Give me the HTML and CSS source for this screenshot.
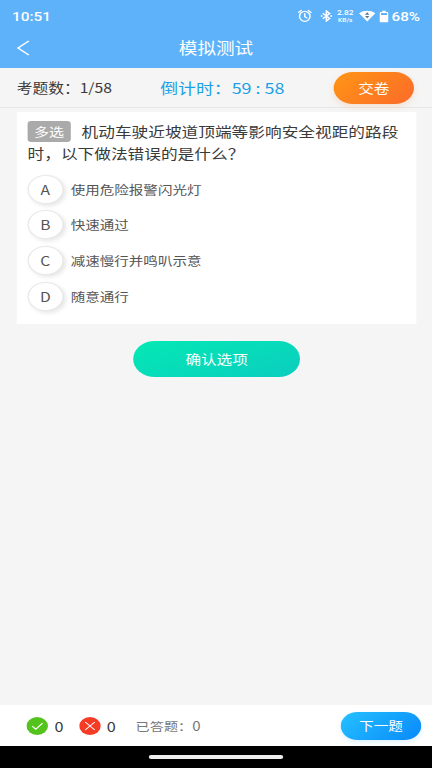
FILE: index.html
```html
<!DOCTYPE html>
<html lang="zh-CN">
<head>
<meta charset="utf-8">
<title>模拟测试</title>
<link rel="stylesheet" href="styles.css">
</head>
<body>
<div class="screen">
  <header class="top">
    <div class="status">
      <span class="clock">10:51</span>
      <div class="status-icons">
        <svg class="alarm" width="12" height="14" viewBox="0 0 12 14" preserveAspectRatio="none" fill="none" stroke="#fff" stroke-width="1.2" stroke-linecap="round"><ellipse cx="6" cy="7.3" rx="4.4" ry="5"/><path d="M.8 3.4 3 1.5M11.2 3.4 9 1.5M6 4.7v3l1.8 1.2"/></svg>
        <svg class="bluetooth" width="10" height="12" viewBox="0 0 10 12" fill="none" stroke="#fff" stroke-width="1.3"><path d="M2 3.2 7.7 8.5 5 11V1l2.7 2.5L2 8.8"/><path d="M.3 6h1.4M8.3 6h1.4" stroke-width="1.5"/></svg>
        <div class="speed"><span>2.82</span><span class="unit">KB/s</span></div>
        <svg class="wifi" width="14" height="12" viewBox="0 0 14 12"><path d="M.2 3.2C4-.1 10-.1 13.8 3.2L7 11.5Z" fill="#fff"/><path d="M5.2 4.7 7 2.3l1.8 2.4ZM5.2 5.9 7 8.3l1.8-2.4Z" fill="#56738f"/></svg>
        <svg class="battery" width="8" height="13" viewBox="0 0 8 13"><path d="M2.5.8h3v1.1h1.2q.9 0 .9.9v8.5q0 .9-.9.9H1.3q-.9 0-.9-.9V2.8q0-.9.9-.9h1.2Z" fill="#fff"/><path d="M1.5 3.1h5v2h-5Z" fill="#5db2fa"/></svg>
        <span class="percent">68%</span>
      </div>
    </div>
    <div class="nav">
      <svg class="back" width="11" height="16" viewBox="0 0 11 16" fill="none" stroke="#fff" stroke-width="1.3"><path d="M10 .9 1 8l9 7.1"/></svg>
      <h1>模拟测试</h1>
    </div>
  </header>
  <section class="info">
    <span class="count">考题数：<span class="num">1/58</span></span>
    <span class="timer">倒计时：<span class="num">59 : 58</span></span>
    <button class="pill submit">交卷</button>
  </section>
  <main>
    <article class="card">
      <p class="question"><span class="tag">多选</span><span>机动车驶近坡道顶端等影响安全视距的路段</span><br><span>时，以下做法错误的是什么？</span></p>
      <ul class="options">
        <li><span class="letter">A</span>使用危险报警闪光灯</li>
        <li><span class="letter">B</span>快速通过</li>
        <li><span class="letter">C</span>减速慢行并鸣叭示意</li>
        <li><span class="letter">D</span>随意通行</li>
      </ul>
    </article>
    <button class="pill confirm">确认选项</button>
  </main>
  <footer class="bottom">
    <svg class="mark" width="18" height="18" viewBox="0 0 18 18" fill="none" stroke="#fff" stroke-width="1"><circle cx="9" cy="9" r="9" fill="#54c31d" stroke="none"/><path d="m4.8 9.2 3 3 5.7-6"/></svg>
    <span class="tally">0</span>
    <svg class="mark" width="18" height="18" viewBox="0 0 18 18" fill="none" stroke="#fff" stroke-width="1"><circle cx="9" cy="9" r="9" fill="#f63b24" stroke="none"/><path d="m5 5 8 8M13 5l-8 8"/></svg>
    <span class="tally">0</span>
    <span class="answered">已答题：<span class="zero">0</span></span>
    <button class="pill next">下一题</button>
  </footer>
  <div class="gesture"><span></span></div>
</div>
</body>
</html>
```
FILE: styles.css
```css
* { box-sizing: border-box; }
body { margin: 0; overflow: hidden; background: #f5f5f5; }

/* The 360px layout is stretched horizontally to fill the 432px viewport. */
.screen {
  width: 360px;
  height: 768px;
  display: flex;
  flex-direction: column;
  transform: scaleX(1.2);
  transform-origin: 0 0;
  background: #f5f5f5;
  color: #3a3a3a;
  font-family: "Noto Sans CJK SC", sans-serif;
  white-space: nowrap;
}
svg { display: block; flex: none; }
button { font-family: inherit; border: 0; padding: 0; color: #fff; }
.pill { display: flex; align-items: center; justify-content: center; border-radius: 20px; font-size: 13px; line-height: 20px; }

.top { height: 68px; background: #5db2fa; color: #fff; flex: none; }
.status { height: 32px; padding: 0 10px; display: flex; align-items: center; justify-content: space-between; font-family: Roboto, sans-serif; font-weight: 500; }
.clock { font-size: 12.8px; }
.status-icons { display: flex; align-items: center; }
.bluetooth { margin-left: 7px; }
.speed { width: 14px; margin-left: 4px; display: flex; flex-direction: column; align-items: center; font-size: 7px; line-height: 7px; }
.unit { font-size: 5.5px; line-height: 6px; }
.wifi { margin-left: 4px; }
.battery { margin-left: 3.5px; }
.percent { margin-left: 2px; font-size: 12.7px; }
.nav { height: 32px; display: grid; grid-template-columns: 40px 1fr 40px; align-items: center; }
.back { margin-left: 14px; }
h1 { margin: 0; text-align: center; font-size: 15.5px; font-weight: 400; line-height: 24px; transform: translateY(-1px); }

.info { height: 40px; flex: none; padding: 0 15px 0 14px; display: flex; align-items: center; border-bottom: 1px solid #e6e6e6; }
.count { width: 119.5px; font-size: 13.1px; }
.timer { font-size: 14.9px; color: #1ba1e6; }
.submit { width: 67px; height: 32px; margin-left: auto; background: linear-gradient(135deg, #ff9614, #fb6a2a); box-shadow: 0 3px 6px rgba(255, 140, 50, .18); }

main { flex: 1; padding: 4px 13px 0 14px; display: flex; flex-direction: column; align-items: center; }
.card { width: 100%; height: 211.5px; padding: 8px 9px 0; background: #fff; }
.question { margin: 0; font-size: 13.9px; line-height: 22px; }
.tag { display: inline-block; width: 35.5px; height: 21px; margin: 1px 9.5px 0 0; border-radius: 3px; background: #aaa; color: #fff; text-align: center; font-size: 12.5px; line-height: 21px; vertical-align: top; }
.options { list-style: none; margin: 7.5px 0 0; padding: 0; color: #555; font-size: 12.1px; }
.options li { display: flex; align-items: center; height: 35.6px; }
.letter { width: 29.5px; height: 29px; margin-right: 6.5px; border: 1px solid #e8e8e8; border-radius: 50%; background: #fff; box-shadow: 2px 2px 4px rgba(0, 0, 0, .1); text-align: center; line-height: 27px; font-size: 13px; }
.confirm { width: 139px; height: 36px; margin-top: 17.5px; background: linear-gradient(160deg, #04e9b4, #0bcdbf); }

.bottom { height: 41px; flex: none; display: flex; align-items: center; padding: 0 9px 0 22px; background: #fff; }
.mark { margin-right: 5.5px; }
.tally { width: 20px; font-size: 13.5px; }
.answered { margin-left: 4px; font-size: 11.8px; color: #777; }
.zero { font-size: 12.5px; }
.next { width: 67px; height: 28px; margin-left: auto; font-size: 12.2px; background: linear-gradient(135deg, #24c1ff, #0989fb); box-shadow: 0 2px 5px rgba(20, 170, 255, .15); }
.gesture { height: 22px; flex: none; display: flex; align-items: center; justify-content: center; background: #000; }
.gesture span { width: 112px; height: 4px; border-radius: 2px; background: #eee; }
```
